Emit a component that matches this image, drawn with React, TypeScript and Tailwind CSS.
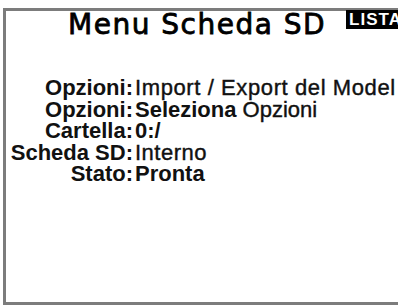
const rows: { label: string; value: React.ReactNode }[] = [
  {
    label: 'Opzioni:',
    value: <span className="font-normal tracking-[0.6px] [-webkit-text-stroke:0.4px_#111]">Import / Export del Model</span>,
  },
  {
    label: 'Opzioni:',
    value: (
      <>
        Seleziona <span className="font-normal [-webkit-text-stroke:0.4px_#111]">Opzioni</span>
      </>
    ),
  },
  { label: 'Cartella:', value: '0:/' },
  {
    label: 'Scheda SD:',
    value: <span className="font-normal tracking-[0.5px] [-webkit-text-stroke:0.4px_#111]">Interno</span>,
  },
  { label: 'Stato:', value: 'Pronta' },
]

export default function App() {
  return (
    <div className="w-[398px] h-[307px] overflow-hidden bg-white pt-[8px] pl-[3px]">
      {/* LCD frame */}
      <div className="w-[420px] h-[297px] border-[3px] border-r-0 border-[#7c7c7c] bg-white">
        <div className="flex items-start h-[28px]">
          <h1
            className="ml-[62px] text-[28px] leading-[28px] tracking-[1.5px] text-black [-webkit-text-stroke:0.8px_black]"
            style={{ fontFamily: '"DejaVu Sans", sans-serif' }}
          >
            Menu Scheda SD
          </h1>
          <span
            className="ml-[20px] mt-[-1px] h-[19px] bg-black pl-[3px] pr-[6px] text-[17px] leading-[19px] font-bold tracking-[1px] text-white"
            style={{ fontFamily: '"Liberation Sans", sans-serif' }}
          >
            LISTA
          </span>
        </div>

        <div
          className="mt-[38px] grid grid-cols-[127px_1fr] gap-x-[2px] text-[22px] leading-[21.5px] font-bold text-[#111]"
          style={{ fontFamily: '"Liberation Sans", sans-serif' }}
        >
          {rows.map((r, i) => (
            <div key={i} className="contents">
              <div className="text-right whitespace-nowrap">{r.label}</div>
              <div className="whitespace-nowrap">{r.value}</div>
            </div>
          ))}
        </div>
      </div>
    </div>
  )
}
